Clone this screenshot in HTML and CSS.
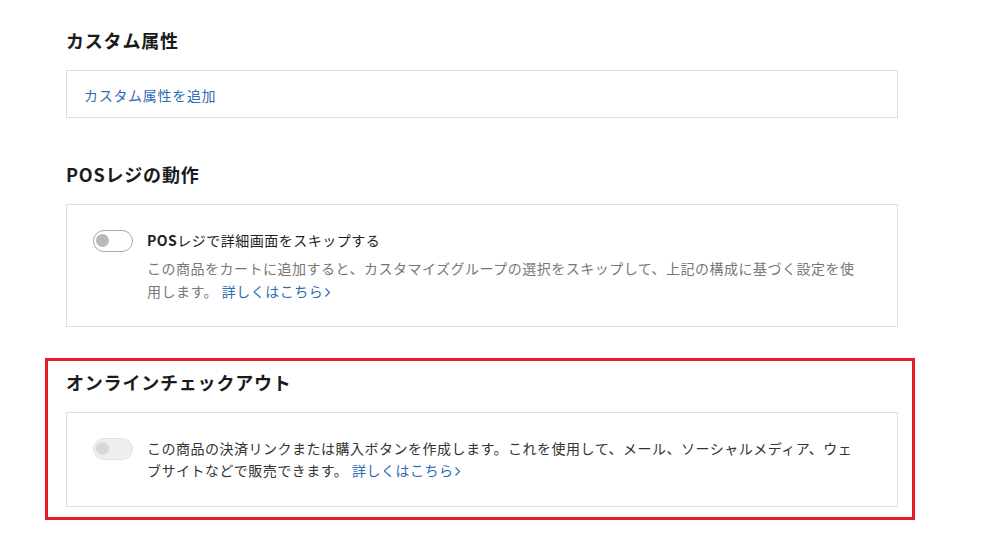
FILE: index.html
```html
<!DOCTYPE html>
<html lang="ja">
<head>
<meta charset="utf-8">
<link rel="stylesheet" href="styles.css">
</head>
<body>
<div class="page">
  <section class="section">
    <h2 class="heading">カスタム属性</h2>
    <div class="card card-link">
      <a class="link" href="#">カスタム属性を追加</a>
    </div>
  </section>

  <section class="section section-pos">
    <h2 class="heading">POSレジの動作</h2>
    <div class="card card-setting">
      <span class="toggle"><span class="knob"></span></span>
      <div class="setting-text">
        <div class="setting-title"><span class="latin">POS</span>レジで詳細画面をスキップする</div>
        <p class="setting-desc">この商品をカートに追加すると、カスタマイズグループの選択をスキップして、上記の構成に基づく設定を使用します。 <a class="link" href="#">詳しくはこちら<svg class="chev" width="7" height="11" viewBox="0 0 7 11" aria-hidden="true"><path d="M1.5 1.5 L5.5 5.5 L1.5 9.5" fill="none" stroke="currentColor" stroke-width="1.2"/></svg></a></p>
      </div>
    </div>
  </section>

  <section class="section section-online highlight">
    <h2 class="heading">オンラインチェックアウト</h2>
    <div class="card card-setting card-online">
      <span class="toggle toggle-disabled"><span class="knob"></span></span>
      <div class="setting-text">
        <p class="setting-desc setting-desc-dark">この商品の決済リンクまたは購入ボタンを作成します。これを使用して、メール、ソーシャルメディア、ウェブサイトなどで販売できます。 <a class="link" href="#">詳しくはこちら<svg class="chev" width="7" height="11" viewBox="0 0 7 11" aria-hidden="true"><path d="M1.5 1.5 L5.5 5.5 L1.5 9.5" fill="none" stroke="currentColor" stroke-width="1.2"/></svg></a></p>
      </div>
    </div>
  </section>
</div>
</body>
</html>
```

FILE: styles.css
```css
* {
  box-sizing: border-box;
}

html, body {
  margin: 0;
  padding: 0;
  background: #ffffff;
}

body {
  font-family: "Noto Sans CJK JP", "Noto Sans", sans-serif;
  color: #222222;
}

.page {
  width: 898px;
  padding: 28px 0 0 66px;
}

.section {
  display: flex;
  flex-direction: column;
}

.section-pos {
  margin-top: 44px;
}

.heading {
  margin: 0 0 18px 0;
  font-size: 18px;
  line-height: 24px;
  font-weight: 700;
  letter-spacing: 0.8px;
  color: #1b1b1b;
}

.card {
  border: 1px solid #dedede;
  background: #ffffff;
}

.card-link {
  padding: 13px 17px 11px 17px;
  font-size: 14px;
  line-height: 22px;
  letter-spacing: 0.7px;
}

.link {
  color: #2d6db3;
  text-decoration: none;
}

.chev {
  display: inline-block;
  vertical-align: -1px;
  margin-left: 1px;
}

.card-setting {
  display: flex;
  align-items: flex-start;
  gap: 14px;
  padding: 24px 32px 23px 26px;
}

.toggle {
  position: relative;
  flex: none;
  width: 40px;
  height: 22px;
  margin-top: 1px;
  border: 1.5px solid #a9a9a9;
  border-radius: 11px;
  background: #ffffff;
}

.knob {
  position: absolute;
  left: 2px;
  top: 3px;
  width: 13px;
  height: 13px;
  border-radius: 50%;
  background: #b9b9b9;
}

.toggle-disabled {
  border-color: #e3e3e3;
  background: #efefef;
}

.toggle-disabled .knob {
  background: #d8d8d8;
}

.setting-text {
  flex: 1;
  font-size: 14px;
  letter-spacing: 0.5px;
}

.setting-title {
  line-height: 23px;
  color: #1e1e1e;
}

.latin {
  font-weight: 600;
}

.setting-desc {
  margin: 5px 0 0 0;
  line-height: 23px;
  color: #777777;
}

.highlight {
  margin: 31px -17px 0 -21px;
  padding: 9px 14px 10px 18px;
  border: 3px solid #e31e2a;
}

.card-online {
  padding-top: 24px;
  padding-bottom: 25px;
}

.card-online .toggle {
  margin-top: 1px;
}

.setting-desc-dark {
  margin-top: 0;
  line-height: 22px;
  color: #333333;
}
```
